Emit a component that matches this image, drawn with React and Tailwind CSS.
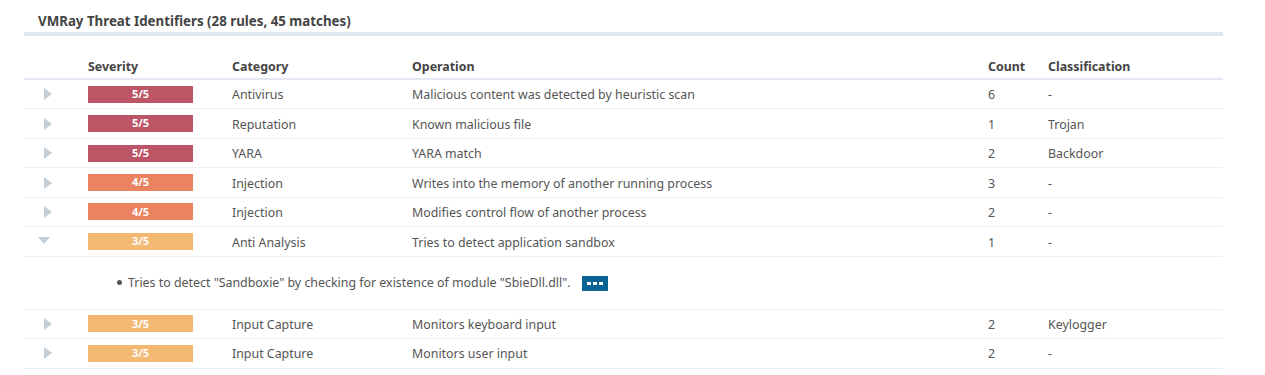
import React from 'react';

const rows = [
    { sev: 5, category: 'Antivirus', operation: 'Malicious content was detected by heuristic scan', count: 6, cls: '-' },
    { sev: 5, category: 'Reputation', operation: 'Known malicious file', count: 1, cls: 'Trojan' },
    { sev: 5, category: 'YARA', operation: 'YARA match', count: 2, cls: 'Backdoor' },
    { sev: 4, category: 'Injection', operation: 'Writes into the memory of another running process', count: 3, cls: '-' },
    { sev: 4, category: 'Injection', operation: 'Modifies control flow of another process', count: 2, cls: '-' },
    {
        sev: 3,
        category: 'Anti Analysis',
        operation: 'Tries to detect application sandbox',
        count: 1,
        cls: '-',
        open: true,
        details: ['Tries to detect "Sandboxie" by checking for existence of module "SbieDll.dll".'],
    },
    { sev: 3, category: 'Input Capture', operation: 'Monitors keyboard input', count: 2, cls: 'Keylogger' },
    { sev: 3, category: 'Input Capture', operation: 'Monitors user input', count: 2, cls: '-' },
];

const sevColor = {
    5: 'bg-[#bc5565]',
    4: 'bg-[#ec8360]',
    3: 'bg-[#f3b872]',
};

const cols = 'grid grid-cols-[64px_144px_180px_576px_60px_1fr] items-center';

function Arrow({ open }) {
    return open ? (
        <svg width="12" height="8" viewBox="0 0 12 8" className="ml-[14px]">
            <path d="M0 0 H12 L6 7 Z" fill="#c3ced6" />
        </svg>
    ) : (
        <svg width="8" height="12" viewBox="0 0 8 12" className="ml-[20px]">
            <path d="M0 0 L8 6 L0 12 Z" fill="#c3ced6" />
        </svg>
    );
}

export default function App() {
    return (
        <div className="bg-white min-h-[375px] px-[24px] pt-[12px] text-[12.4px] text-[#555] font-['Noto_Sans','Open_Sans',sans-serif]">
            <div className="w-[1199px]">
                <h2 className="pl-[14px] h-[20px] leading-[19px] text-[13.3px] font-bold text-[#444] border-b-[4px] border-[#e0e7f1] box-content">
                    VMRay Threat Identifiers (28 rules, 45 matches)
                </h2>
                <div className={`${cols} h-[44px] pt-[20px] border-b-2 border-[#e4e8f2] font-bold text-[#444]`}>
                    <div></div>
                    <div>Severity</div>
                    <div>Category</div>
                    <div>Operation</div>
                    <div>Count</div>
                    <div>Classification</div>
                </div>
                {rows.map((r, i) => (
                    <div key={i}>
                        <div className={`${cols} h-[29.45px] border-b border-[#eceff6]`}>
                            <div className="flex items-center">
                                <Arrow open={r.open} />
                            </div>
                            <div className={`${sevColor[r.sev]} w-[105px] h-[17px] flex items-center justify-center text-white font-bold text-[11px]`}>
                                {r.sev}/5
                            </div>
                            <div className="pt-[3px]">{r.category}</div>
                            <div className="pt-[3px]">{r.operation}</div>
                            <div className="pt-[3px]">{r.count}</div>
                            <div className="pt-[3px]">{r.cls}</div>
                        </div>
                        {r.open && (
                            <div className="h-[53px] border-b border-[#eceff6] pl-[93px] flex items-center">
                                {r.details.map((d, j) => (
                                    <div key={j} className="flex items-center">
                                        <span className="w-[5px] h-[5px] rounded-full bg-[#555] mr-[6px]"></span>
                                        <span className="pt-[2px]">{d}</span>
                                        <button className="ml-[11px] mt-[2px] w-[26px] h-[15px] bg-[#0b6394] flex items-center justify-center gap-[2px]">
                                            <span className="w-[4px] h-[3px] bg-white"></span>
                                            <span className="w-[4px] h-[3px] bg-white"></span>
                                            <span className="w-[4px] h-[3px] bg-white"></span>
                                        </button>
                                    </div>
                                ))}
                            </div>
                        )}
                    </div>
                ))}
            </div>
        </div>
    );
}
